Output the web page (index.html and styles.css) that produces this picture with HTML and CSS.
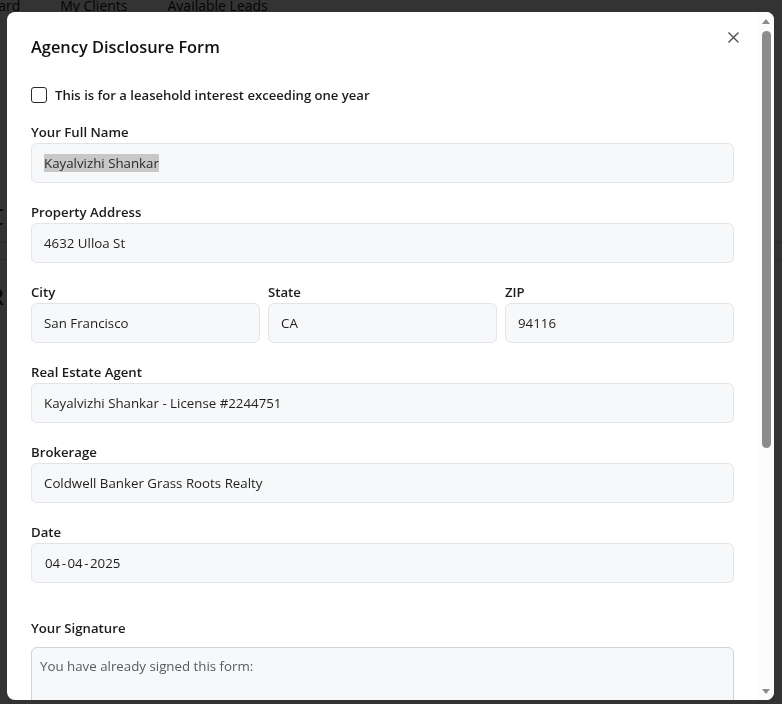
FILE: index.html
```html
<!DOCTYPE html>
<html lang="en">
<head>
<meta charset="utf-8">
<title>Agency Disclosure Form</title>
<link rel="stylesheet" href="styles.css">
</head>
<body>
<div class="page">
  <nav class="topnav">
    <span class="nav-item nav-first">Dashboard</span>
    <span class="nav-item">My Clients</span>
    <span class="nav-item">Available Leads</span>
  </nav>
  <div class="page-body">
    <div class="bg-rule"></div>
    <div class="bg-letter bg-c">C</div>
    <div class="bg-rule"></div>
    <div class="bg-letter bg-r">R</div>
  </div>
</div>

<div class="overlay"></div>

<div class="modal" role="dialog" aria-labelledby="modal-title">
  <div class="modal-body">
    <h2 class="modal-title" id="modal-title">Agency Disclosure Form</h2>

    <label class="check-row">
      <span class="checkbox"></span>
      <span>This is for a leasehold interest exceeding one year</span>
    </label>

    <div class="group">
      <div class="label">Your Full Name</div>
      <div class="field"><span class="selected">Kayalvizhi Shankar</span></div>
    </div>

    <div class="group">
      <div class="label">Property Address</div>
      <div class="field">4632 Ulloa St</div>
    </div>

    <div class="group row3">
      <div class="col">
        <div class="label">City</div>
        <div class="field">San Francisco</div>
      </div>
      <div class="col">
        <div class="label">State</div>
        <div class="field">CA</div>
      </div>
      <div class="col">
        <div class="label">ZIP</div>
        <div class="field">94116</div>
      </div>
    </div>

    <div class="group">
      <div class="label">Real Estate Agent</div>
      <div class="field">Kayalvizhi Shankar - License #2244751</div>
    </div>

    <div class="group">
      <div class="label">Brokerage</div>
      <div class="field">Coldwell Banker Grass Roots Realty</div>
    </div>

    <div class="group">
      <div class="label">Date</div>
      <div class="field date">04<span class="dash">-</span>04<span class="dash">-</span>2025</div>
    </div>

    <div class="group signature-group">
      <div class="label sig-label">Your Signature</div>
      <div class="sig-box">You have already signed this form:</div>
    </div>
  </div>

  <button class="close" aria-label="Close">
    <svg width="11" height="11" viewBox="0 0 11 11"><path d="M0.5 0.5 L10.5 10.5 M10.5 0.5 L0.5 10.5" stroke="#4a4a4a" stroke-width="1.3" fill="none"/></svg>
  </button>

  <div class="scrollbar">
    <span class="sb-up"></span>
    <span class="sb-thumb"></span>
    <span class="sb-down"></span>
  </div>
</div>
</body>
</html>
```

FILE: styles.css
```css
* { box-sizing: border-box; }

html, body {
  margin: 0;
  padding: 0;
  height: 100%;
  overflow: hidden;
}

body {
  font-family: "Open Sans", "Noto Sans", "Liberation Sans", sans-serif;
  background: #ffffff;
  color: #212529;
}

.page {
  height: 100%;
}

.topnav {
  display: flex;
  gap: 40px;
  height: 12px;
  align-items: center;
  margin-left: -52px;
  font-size: 14px;
  color: #111;
  white-space: nowrap;
  line-height: 12px;
}

.page-body {
  padding-top: 230px;
}

.bg-rule {
  height: 1px;
  background: #d0d0d0;
  margin: 0 0 30px 0;
}

.bg-letter {
  font-size: 22px;
  color: #000;
  line-height: 26px;
  margin-left: -10px;
}

.bg-c { margin-top: -70px; margin-bottom: 30px; }
.bg-r { margin-top: -7px; }

.overlay {
  position: fixed;
  inset: 0;
  background: rgba(0, 0, 0, 0.8);
}

.modal {
  position: fixed;
  left: 7px;
  top: 12px;
  width: 767px;
  height: 688px;
  background: #ffffff;
  border-radius: 8px;
  overflow: hidden;
}

.modal-body {
  padding: 22px 40px 0 24px;
}

.modal-title {
  margin: 0 0 25px 0;
  font-size: 16.4px;
  line-height: 26px;
  font-weight: 600;
  color: #111;
}

.check-row {
  display: flex;
  align-items: center;
  gap: 8px;
  height: 20px;
  font-size: 13.1px;
  font-weight: 600;
  color: #1c1c1c;
  margin-bottom: 16px;
}

.checkbox {
  width: 16px;
  height: 16px;
  border: 1.6px solid #2b2b2b;
  border-radius: 3px;
  background: #fff;
  flex: none;
}

.group {
  margin-bottom: 18px;
}

.label {
  font-size: 13.2px;
  line-height: 20px;
  padding-top: 1px;
  font-weight: 600;
  color: #1c1c1c;
  margin-bottom: 1px;
}

.field {
  height: 40px;
  border: 1px solid #e2e4e7;
  border-radius: 6px;
  background: #f7f8fa;
  padding: 0 12px;
  display: flex;
  align-items: center;
  font-size: 13.3px;
  color: #1f1f1f;
  white-space: nowrap;
}

.selected {
  background: #c8c8c8;
  color: #2a2a2a;
}

.row3 {
  display: grid;
  grid-template-columns: 1fr 1fr 1fr;
  gap: 8px;
}

.date {
  padding-left: 13px;
}

.dash {
  margin: 0 1.5px;
}

.signature-group {
  margin-top: 34px;
}

.sig-label {
  margin-bottom: 9px;
}

.sig-box {
  height: 90px;
  border: 1px solid #cfd2d6;
  border-radius: 6px;
  background: #f7f8fa;
  padding: 8px 8px;
  font-size: 13.3px;
  line-height: 20px;
  color: #555b62;
}

.close {
  position: absolute;
  top: 20px;
  right: 35px;
  width: 11px;
  height: 11px;
  padding: 0;
  border: 0;
  background: transparent;
  display: flex;
}

.scrollbar {
  position: absolute;
  top: 0;
  right: 0;
  width: 16px;
  height: 100%;
  background: #fbfbfb;
  display: flex;
  flex-direction: column;
  align-items: center;
}

.sb-up {
  margin-top: 7px;
  width: 0;
  height: 0;
  border-left: 4.5px solid transparent;
  border-right: 4.5px solid transparent;
  border-bottom: 5px solid #8a8a8a;
}

.sb-thumb {
  margin-top: 7px;
  width: 9px;
  height: 417px;
  background: #8c8c8c;
  border-radius: 5px;
}

.sb-down {
  margin-top: auto;
  margin-bottom: 6px;
  width: 0;
  height: 0;
  border-left: 4.5px solid transparent;
  border-right: 4.5px solid transparent;
  border-top: 5px solid #8a8a8a;
}
```
